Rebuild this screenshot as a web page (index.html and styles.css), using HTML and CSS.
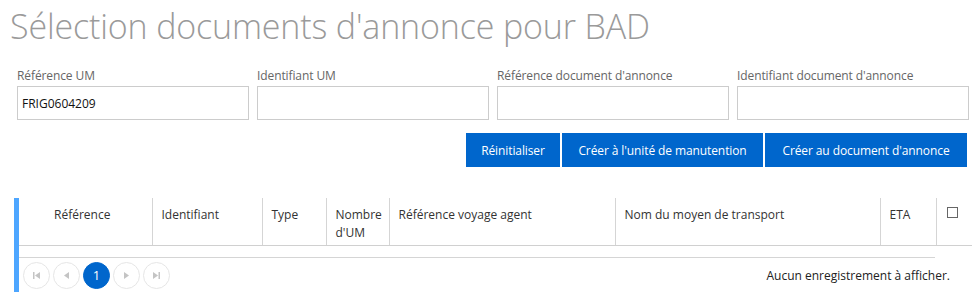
FILE: index.html
```html
<!DOCTYPE html>
<html lang="fr">
<head>
    <meta charset="UTF-8">
    <meta name="viewport" content="width=device-width, initial-scale=1.0">
    <title>Sélection documents d'annonce pour BAD</title>
    <link rel="stylesheet" href="styles.css">
</head>
<body>
    <h1 class="title">Sélection documents d'annonce pour BAD</h1>
    <div class="filters">
        <div class="field">
            <label>Référence UM</label>
            <input type="text" value="FRIG0604209">
        </div>
        <div class="field">
            <label>Identifiant UM</label>
            <input type="text">
        </div>
        <div class="field">
            <label>Référence document d'annonce</label>
            <input type="text">
        </div>
        <div class="field">
            <label>Identifiant document d'annonce</label>
            <input type="text">
        </div>
    </div>
    <div class="actions">
        <button>Réinitialiser</button>
        <button>Créer à l'unité de manutention</button>
        <button>Créer au document d'annonce</button>
    </div>
    <div class="grid">
        <table class="grid-table">
            <colgroup>
                <col style="width:133px">
                <col style="width:110px">
                <col style="width:64px">
                <col style="width:63px">
                <col style="width:226px">
                <col style="width:265px">
                <col style="width:56px">
                <col>
            </colgroup>
            <thead>
                <tr>
                    <th class="first">Référence</th>
                    <th>Identifiant</th>
                    <th>Type</th>
                    <th>Nombre d'UM</th>
                    <th>Référence voyage agent</th>
                    <th>Nom du moyen de transport</th>
                    <th>ETA</th>
                    <th class="check"><span class="box"></span></th>
                </tr>
            </thead>
        </table>
        <div class="grid-body"></div>
        <div class="pager">
            <div class="pages">
                <span class="page-btn">
                    <svg width="9" height="9" viewBox="0 0 9 9"><rect x="1" y="1" width="1.5" height="7" fill="#c4c4c4"/><path d="M8 1 L3 4.5 L8 8 Z" fill="#c4c4c4"/></svg>
                </span>
                <span class="page-btn">
                    <svg width="9" height="9" viewBox="0 0 9 9"><path d="M7 1 L2 4.5 L7 8 Z" fill="#c4c4c4"/></svg>
                </span>
                <span class="page-btn active">1</span>
                <span class="page-btn">
                    <svg width="9" height="9" viewBox="0 0 9 9"><path d="M2 1 L7 4.5 L2 8 Z" fill="#c4c4c4"/></svg>
                </span>
                <span class="page-btn">
                    <svg width="9" height="9" viewBox="0 0 9 9"><path d="M1 1 L6 4.5 L1 8 Z" fill="#c4c4c4"/><rect x="6.5" y="1" width="1.5" height="7" fill="#c4c4c4"/></svg>
                </span>
            </div>
            <div class="pager-info">Aucun enregistrement à afficher.</div>
        </div>
    </div>
</body>
</html>
```

FILE: styles.css
```css
body {
    font-family: 'Open Sans', 'Noto Sans', sans-serif;
    margin: 0;
    padding: 0;
    background-color: #fff;
    color: #333;
}
.title {
    font-size: 34px;
    font-weight: 300;
    color: #9a9a9a;
    margin: 0;
    padding: 6px 0 0 10px;
    height: 61px;
    box-sizing: border-box;
    line-height: 40px;
    letter-spacing: -0.15px;
}
.filters {
    display: grid;
    grid-template-columns: repeat(4, 232px);
    column-gap: 8px;
    padding-left: 17px;
}
.field label {
    display: block;
    font-size: 12px;
    color: #666;
    height: 25px;
    line-height: 30px;
    letter-spacing: -0.1px;
}
.field input {
    display: block;
    width: 232px;
    height: 34px;
    box-sizing: border-box;
    border: 1px solid #ccc;
    padding: 0 4px;
    font-family: inherit;
    font-size: 12px;
    color: #111;
    outline: none;
}
.actions {
    display: flex;
    justify-content: flex-end;
    gap: 2px;
    padding-right: 5px;
    margin-top: 13px;
}
.actions button {
    height: 34px;
    padding: 0 12px;
    font-family: inherit;
    font-size: 12px;
    color: #fff;
    background-color: #0066cc;
    border: none;
    cursor: pointer;
    letter-spacing: -0.1px;
}
.actions button:nth-child(1) { width: 94px; }
.actions button:nth-child(2) { width: 201px; }
.actions button:nth-child(3) { width: 202px; }
.grid {
    margin: 31px 0 0 14px;
    border-left: 5px solid #4da6ff;
}
.grid-table {
    width: 953px;
    border-collapse: collapse;
    table-layout: fixed;
}
.grid-table th {
    height: 47px;
    box-sizing: border-box;
    font-size: 12px;
    font-weight: normal;
    text-align: left;
    vertical-align: top;
    padding: 8px 8px 0 9px;
    line-height: 18px;
    color: #333;
    border-left: 1px solid #d5d5d5;
    border-bottom: 1px solid #d0d0d0;
}
.grid-table th.first {
    border-left: none;
    padding-left: 35px;
}
.grid-table th.check {
    padding-left: 10px;
    padding-top: 9px;
}
.box {
    display: block;
    width: 11px;
    height: 11px;
    border: 1px solid #666;
    box-sizing: border-box;
    background: #fff;
}
.grid-body {
    height: 11px;
    width: 916px;
    border-bottom: 1px solid #d5d5d5;
}
.pager {
    display: flex;
    justify-content: space-between;
    align-items: center;
    padding: 4px 22px 3px 4px;
}
.pages {
    display: flex;
    gap: 3px;
}
.page-btn {
    display: flex;
    align-items: center;
    justify-content: center;
    width: 27px;
    height: 27px;
    box-sizing: border-box;
    border: 1px solid #e6e6e6;
    border-radius: 50%;
    font-size: 13px;
    color: #fff;
}
.page-btn.active {
    background-color: #0066cc;
    border-color: #0066cc;
}
.pager-info {
    font-size: 12px;
    color: #222;
}
```
